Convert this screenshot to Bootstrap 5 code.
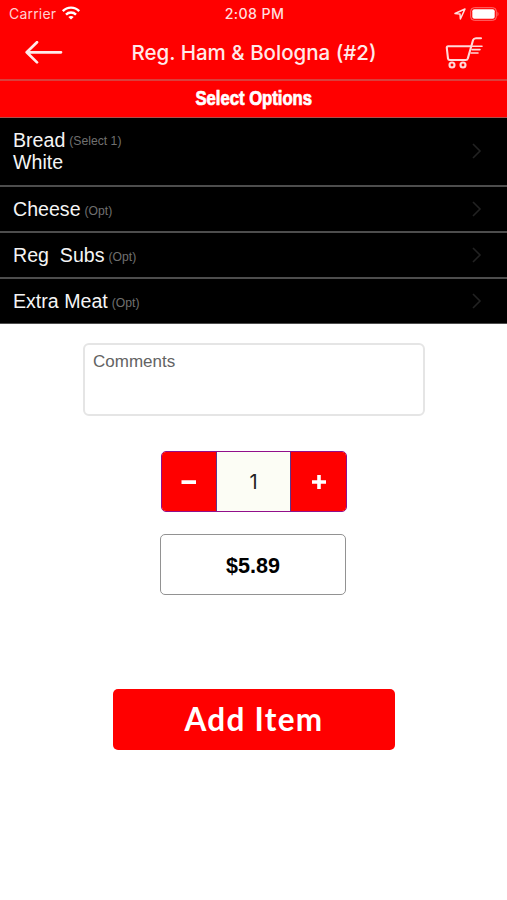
<!DOCTYPE html>
<html lang="en">
<head>
<meta charset="utf-8">
<meta name="viewport" content="width=device-width, initial-scale=1">
<title>Reg. Ham &amp; Bologna (#2)</title>
<link href="https://cdn.jsdelivr.net/npm/bootstrap@5.3.0/dist/css/bootstrap.min.css" rel="stylesheet">
<style>
  body { font-family: "Liberation Sans", Arial, sans-serif; min-height: 900px; }
  svg { display: block; flex: none; }
  .app-head { background: #f00; height: 81px; border-bottom: 2px solid #d9403c; }
  .status-bar { height: 27px; padding: 0 7px 0 9px; font: 400 14px/27px Inter, sans-serif; }
  .status-bar > div { flex: 1 1 0; }
  .carrier { color: #ffd0d0; letter-spacing: .2px; }
  .clock { font-weight: 500; font-size: 14.2px; letter-spacing: .4px; color: #ffdede; line-height: 28px; }
  .title-bar { height: 52px; padding: 0 24px 0 25px; }
  .page-title { font: 500 20.5px/50px Inter, sans-serif; color: #ffeaea; white-space: nowrap; }
  .section-title { background: #f00; height: 37px; border-bottom: 1px solid #a8504c; font-size: 18.5px; line-height: 36px; font-weight: 700; }
  .section-title span { display: inline-block; transform: scale(.9, 1.06); -webkit-text-stroke: .7px #fff; }
  .option { height: 46px; border-bottom: 2px solid #4d4d4d; padding: 0 24px 0 13px; font-size: 19.6px; line-height: 22px; color: #f5f5f5; white-space: pre; }
  .option.tall { height: 69px; padding-bottom: 2px; }
  .option:last-child { height: 45px; border-bottom-width: 1px; }
  .hint { font-size: 12.2px; line-height: 1; color: #707070; margin-left: 4px; vertical-align: 1.5px; }
  .comments { width: 342px; height: 73px; margin: 19px 0 0 83px; border: 2px solid #e5e5e5; padding: 5px 8px; font-size: 17px; line-height: 24px; resize: none; box-shadow: none; min-height: 0 !important; }
  .comments::placeholder { color: #636363; }
  .stepper { width: 186px; height: 61px; margin: 35px 0 0 161px; border: 1px solid #920f8b; border-radius: 5px; overflow: hidden; }
  .step { flex: none; width: 55px; background: #f00; border: 0; padding: 0; }
  .step:first-child { width: 54px; }
  .count { background: #fcfdf5; border: solid #61358a; border-width: 0 1px; font: 400 20px/61px Inter, sans-serif; color: #222; }
  .price { width: 186px; height: 61px; margin: 22px 0 0 160px; padding-top: 3px; border: 1px solid #929292; border-radius: 5px; font-size: 21.6px; color: #000; }
  .add-item { width: 282px; height: 61px; margin: 94px 0 0 113px; background: #f00; border: 0; border-radius: 5px; font: 700 31.5px/58px Lato, sans-serif; letter-spacing: 1.3px; color: #fff; padding: 0 0 2px; }
</style>
</head>
<body class="bg-white">
<header class="app-head">
  <div class="status-bar d-flex align-items-center">
    <div class="d-flex align-items-center carrier"><span>Carrier</span>
      <svg style="margin-left:5px" width="20" height="16" viewBox="0 0 20 16" fill="none" stroke="#fff" stroke-width="2.4"><path d="M1.8 5.1C6.3.4 13.7.4 18.2 5.1M5 8.6C7.8 5.8 12.2 5.8 15 8.6"/><path d="M10 13.6 7.3 10.9Q10 9 12.7 10.9Z" fill="#fff" stroke="none"/></svg>
    </div>
    <div class="clock text-center">2:08 PM</div>
    <div class="d-flex align-items-center justify-content-end">
      <svg width="12" height="12" viewBox="0 0 12 12" fill="none" stroke="#ffe0e0" stroke-width="1.5" stroke-linejoin="round"><path d="M1 5.5 11 1 6.4 11 6 6Z"/></svg>
      <svg class="ms-1" width="30" height="14" viewBox="0 0 30 14"><rect x=".7" y=".7" width="25.6" height="12.6" rx="3.5" fill="none" stroke="#ff7070"/><rect x="2.3" y="2.3" width="22.4" height="9.4" rx="2" fill="#fff"/><path d="M27.5 4.5q2 2.5 0 5z" fill="#ff7070"/></svg>
    </div>
  </div>
  <div class="title-bar d-flex align-items-center justify-content-between">
    <svg width="38" height="24" viewBox="0 0 38 24" fill="none" stroke="#ffeaea" stroke-width="2.7" stroke-linecap="round" stroke-linejoin="round"><path d="M12 1.2 1.7 11.3 12 21.4M2 11.3H36"/></svg>
    <h1 class="page-title m-0">Reg. Ham &amp; Bologna (#2)</h1>
    <svg width="38" height="33" viewBox="0 0 38 33" fill="none" stroke="#ffdada" stroke-width="2.1" stroke-linecap="round" stroke-linejoin="round"><path d="M36 1.2H31Q28.8 1.2 28 3.2L22.8 21.5Q22.3 23 20.8 23H4.7Q3.3 23 3 21.5L1.8 11Q1.6 9.3 3.2 9.3H26"/><path d="M27.5 9.2H37M27 12.6H35M26 16H33" stroke-width="1.6"/><circle cx="7" cy="28" r="2.5"/><circle cx="18" cy="28" r="2.5"/></svg>
  </div>
</header>
<div class="section-title text-center text-white"><span>Select Options</span></div>
<div class="bg-black">
  <div class="option tall d-flex align-items-center justify-content-between"><div><div>Bread<span class="hint">(Select 1)</span></div><div>White</div></div><svg width="12" height="16" viewBox="0 0 12 16" fill="none" stroke="#222" stroke-width="1.6"><path d="M2 1 9 8 2 15"/></svg></div>
  <div class="option d-flex align-items-center justify-content-between"><div>Cheese<span class="hint">(Opt)</span></div><svg width="12" height="16" viewBox="0 0 12 16" fill="none" stroke="#222" stroke-width="1.6"><path d="M2 1 9 8 2 15"/></svg></div>
  <div class="option d-flex align-items-center justify-content-between"><div>Reg  Subs<span class="hint">(Opt)</span></div><svg width="12" height="16" viewBox="0 0 12 16" fill="none" stroke="#222" stroke-width="1.6"><path d="M2 1 9 8 2 15"/></svg></div>
  <div class="option d-flex align-items-center justify-content-between"><div>Extra Meat<span class="hint">(Opt)</span></div><svg width="12" height="16" viewBox="0 0 12 16" fill="none" stroke="#222" stroke-width="1.6"><path d="M2 1 9 8 2 15"/></svg></div>
</div>
<main>
  <textarea class="form-control comments" placeholder="Comments" aria-label="Comments"></textarea>
  <div class="stepper d-flex">
    <button class="step d-flex align-items-center justify-content-center" aria-label="Decrease"><svg width="16" height="16" viewBox="0 0 16 16"><path d="M.5 6.2H15V10H.5Z" fill="#fff"/></svg></button>
    <div class="count flex-grow-1 text-center">1</div>
    <button class="step d-flex align-items-center justify-content-center" aria-label="Increase"><svg width="16" height="16" viewBox="0 0 16 16"><path d="M1 6.2H6.2V1H9.8V6.2H15V9.8H9.8V15H6.2V9.8H1Z" fill="#fff"/></svg></button>
  </div>
  <div class="price d-flex align-items-center justify-content-center fw-bold">$5.89</div>
  <button class="add-item d-block text-center">Add Item</button>
</main>
<script src="https://cdn.jsdelivr.net/npm/bootstrap@5.3.0/dist/js/bootstrap.bundle.min.js"></script>
</body>
</html>
